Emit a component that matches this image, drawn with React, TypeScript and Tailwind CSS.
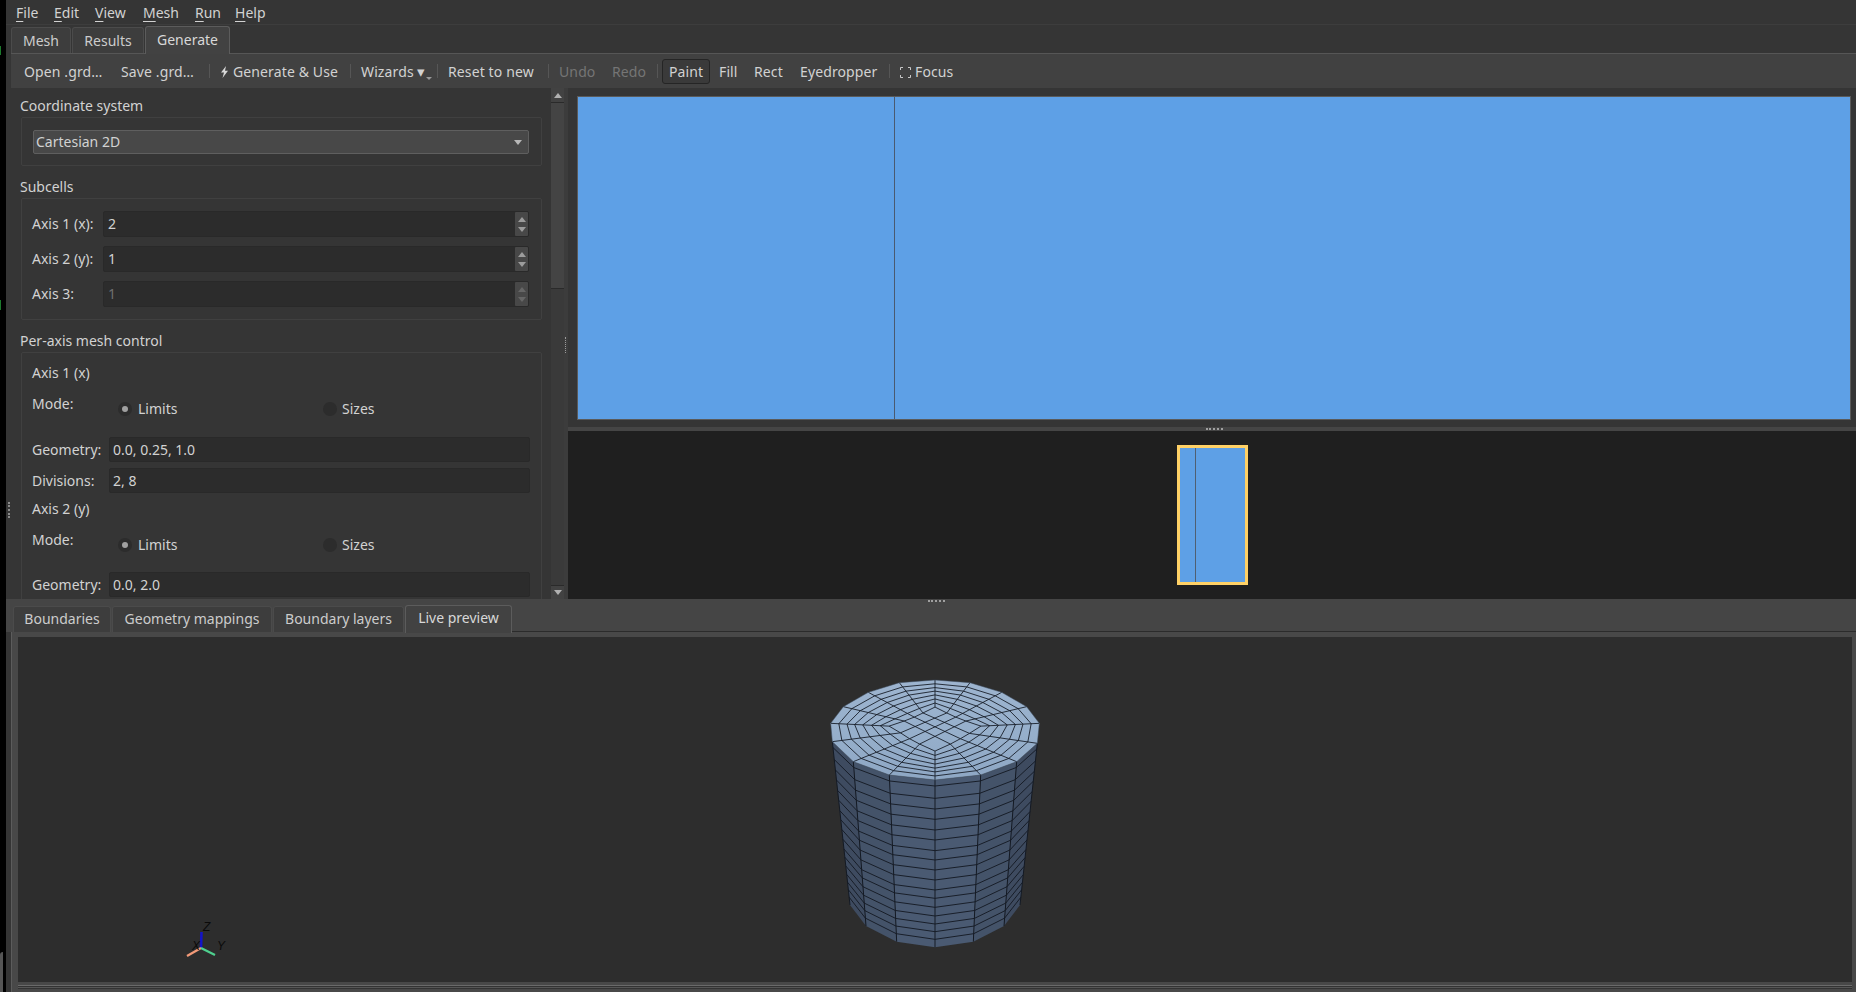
import React from "react";

type P = [number, number];
const topV: P[] = [[405,60],[510,68],[605,97],[680,140],[718,190],[712,250],[650,305],[542,345],[405,360],[268,345],[160,305],[97,245],[92,190],[130,140],[205,97],[298,68]];
const botV: Record<number, P> = {5:[660,735],6:[612,798],7:[520,845],8:[405,862],9:[290,845],10:[198,798],11:[150,735]};
const cx = 405, cy = 205;
const t0 = 0.44;
const ringU = [0, 0.15, 0.3, 0.45, 0.59, 0.72, 0.86];
const sideT = [378,415,447,478,510,540,572,600,630,660,690,715,742,768,792,815,838].map((y) => (y - 360) / 502);
const faceFill: Record<number, string> = {5:"#3e4b60",6:"#445369",7:"#4a5a72",8:"#4a5a72",9:"#445369",10:"#3e4b60"};

function Mesh() {
  const pts = (arr: P[]) => arr.map((p) => p.join(",")).join(" ");
  const ratio = (i: number) => {
    const th = (i / 16) * 2 * Math.PI;
    return 1 / (Math.abs(Math.cos(th)) + Math.abs(Math.sin(th)));
  };
  const ringPt = (i: number, u: number): P => {
    const r = (1 - u) * t0 * ratio(i) + u;
    const v = topV[i];
    return [cx + (v[0] - cx) * r, cy + (v[1] - cy) * r];
  };
  const ring = (u: number) => topV.map((_, i) => ringPt(i, u));
  const lerp = (a: P, b: P, t: number): P => [a[0] + (b[0] - a[0]) * t, a[1] + (b[1] - a[1]) * t];
  const faces = [5, 6, 7, 8, 9, 10];
  const col = "#141a24";
  const grid: [P, P][] = [];
  for (let k = 1; k < 4; k++) {
    grid.push([ringPt(k, 0), ringPt(12 - k, 0)]);
    grid.push([ringPt(16 - k, 0), ringPt(4 + k, 0)]);
  }
  return (
    <svg width={270} height={300} viewBox="0 0 810 900" className="shrink-0">
      <defs>
        <linearGradient id="topg" x1="0" y1="0" x2="0" y2="1">
          <stop offset="0" stopColor="#9db4cf" />
          <stop offset="0.55" stopColor="#96afcb" />
          <stop offset="1" stopColor="#8ea7c4" />
        </linearGradient>
      </defs>
      {faces.map((i) => (
        <polygon key={i} points={pts([topV[i], topV[i + 1], botV[i + 1], botV[i]])} fill={faceFill[i]} />
      ))}
      {faces.map((i) =>
        sideT.map((t, k) => {
          const a = lerp(topV[i], botV[i], t);
          const b = lerp(topV[i + 1], botV[i + 1], t);
          return <line key={`${i}-${k}`} x1={a[0]} y1={a[1]} x2={b[0]} y2={b[1]} stroke={col} strokeWidth={2.8} />;
        })
      )}
      {[5, 6, 7, 8, 9, 10, 11].map((i) => (
        <line key={i} x1={topV[i][0]} y1={topV[i][1]} x2={botV[i][0]} y2={botV[i][1]} stroke={col} strokeWidth={3} />
      ))}
      <polygon points={pts(topV)} fill="url(#topg)" />
      {ringU.map((u) => (
        <polygon key={u} points={pts(ring(u))} fill="none" stroke={col} strokeWidth={2.6} />
      ))}
      {topV.map((v, i) => {
        const s = ringPt(i, 0);
        return <line key={i} x1={s[0]} y1={s[1]} x2={v[0]} y2={v[1]} stroke={col} strokeWidth={2.6} />;
      })}
      {grid.map(([a, b], i) => (
        <line key={`g${i}`} x1={a[0]} y1={a[1]} x2={b[0]} y2={b[1]} stroke={col} strokeWidth={2.6} />
      ))}
      <polygon points={pts(topV)} fill="none" stroke="#3d4a5c" strokeWidth={1.5} />
    </svg>
  );
}

function Triad() {
  return (
    <svg width={100} height={92} viewBox="0 0 100 92" className="absolute left-[142px] top-[263px]">
      <line x1={41} y1={48} x2={41.5} y2={32} stroke="#1414c8" strokeWidth={2.6} />
      <line x1={41} y1={48} x2={27} y2={56} stroke="#f39a78" strokeWidth={2.2} />
      <line x1={41} y1={48} x2={55} y2={55} stroke="#4ed08f" strokeWidth={2.2} />
      <text x={43} y={31} fontSize={12} fontStyle="italic" fill="#0a0a0a" fontFamily="Liberation Sans, sans-serif">Z</text>
      <text x={32} y={50} fontSize={12} fontStyle="italic" fill="#0a0a0a" fontFamily="Liberation Sans, sans-serif">X</text>
      <text x={57} y={50} fontSize={12} fontStyle="italic" fill="#0a0a0a" fontFamily="Liberation Sans, sans-serif">Y</text>
    </svg>
  );
}

function MenuItem({ w, first, rest }: { w: string; first: string; rest: string }) {
  return (
    <span className={`${w} whitespace-nowrap`}>
      <span className="underline underline-offset-[3px]">{first}</span>
      {rest}
    </span>
  );
}

function Sep({ mr }: { mr: string }) {
  return <span className={`${mr} h-[14px] w-px bg-[#565656] shrink-0`} />;
}

function Up({ c }: { c: string }) {
  return (
    <svg width={8} height={5} viewBox="0 0 8 5">
      <polygon points="4,0 8,5 0,5" fill={c} />
    </svg>
  );
}
function Down({ c }: { c: string }) {
  return (
    <svg width={8} height={5} viewBox="0 0 8 5">
      <polygon points="0,0 8,0 4,5" fill={c} />
    </svg>
  );
}

function Spin({ label, value, disabled }: { label: string; value: string; disabled?: boolean }) {
  const c = disabled ? "#666666" : "#9c9c9c";
  return (
    <div className="flex h-[26px] items-center pl-[10px]">
      <span className="w-[71px] whitespace-nowrap">{label}</span>
      <div className={`flex h-[26px] w-[426px] items-center justify-between rounded-[2px] border border-[#292929] bg-[#2c2c2c] pl-[4px] ${disabled ? "text-[#707070]" : ""}`}>
        <span>{value}</span>
        <div className="flex h-[24px] w-[13px] flex-col items-center justify-around rounded-[1px] bg-[#484848] py-[2px]">
          <Up c={c} />
          <Down c={c} />
        </div>
      </div>
    </div>
  );
}

function Field({ label, value }: { label: string; value: string }) {
  return (
    <div className="flex items-center pl-[10px]">
      <span className="w-[77px] whitespace-nowrap">{label}</span>
      <div className="flex h-[25px] w-[421px] items-center rounded-[2px] border border-[#292929] bg-[#2c2c2c] pl-[3px]">{value}</div>
    </div>
  );
}

function ModeRow() {
  return (
    <div className="flex h-[43px] pl-[10px]">
      <span className="h-[20px] w-[86px]">Mode:</span>
      <div className="mt-[5px] flex h-[20px] w-[205px] items-center gap-[6px]">
        <span className="flex h-[14px] w-[14px] items-center justify-center rounded-full bg-[#2c2c2c]">
          <span className="h-[6px] w-[6px] rounded-full bg-[#a0a0a0]" />
        </span>
        <span>Limits</span>
      </div>
      <div className="mt-[5px] flex h-[20px] items-center gap-[5px]">
        <span className="h-[14px] w-[14px] rounded-full bg-[#2c2c2c]" />
        <span>Sizes</span>
      </div>
    </div>
  );
}

function TopTab({ label, w, active, low }: { label: string; w: string; active?: boolean; low?: boolean }) {
  return active ? (
    <div className={`${w} -mb-px flex h-[28px] items-center justify-center rounded-t-[3px] border border-b-0 border-[#5c5c5c] bg-[#424242] ${low ? "pb-[4px]" : "pb-[2px]"} text-[#d8d8d8]`}>{label}</div>
  ) : (
    <div className={`${w} flex h-[26px] items-center justify-center rounded-t-[3px] border border-b-0 border-[#4b4b4b] bg-[#3d3d3d] ${low ? "pb-[2px]" : ""} text-[#cccccc]`}>{label}</div>
  );
}

function ToolText({ w, children, dim }: { w: string; children: React.ReactNode; dim?: boolean }) {
  return <span className={`${w} shrink-0 whitespace-nowrap pt-[2px] ${dim ? "text-[#757575]" : ""}`}>{children}</span>;
}

export default function App() {
  return (
    <div className="flex h-[992px] w-[1856px] overflow-hidden bg-black text-[14px] leading-[20px] text-[#d2d2d2] [font-family:'Noto_Sans',sans-serif]">
      <div className="flex w-[6px] shrink-0 flex-col">
        <div className="mt-[46px] h-[9px] w-px bg-[#1c7a2c]" />
        <div className="mt-[245px] h-[10px] w-px bg-[#1c7a2c]" />
        <div className="mt-[642px] h-[40px] w-[3px] rounded-tl-[3px] bg-[#555555]" />
      </div>
      <div className="relative flex min-w-0 flex-1 flex-col bg-[#353535] pt-px">
        {/* menu */}
        <div className="flex h-[24px] shrink-0 items-center border-b border-[#3d3d3d] pl-[10px]">
          <MenuItem w="w-[38px]" first="F" rest="ile" />
          <MenuItem w="w-[41px]" first="E" rest="dit" />
          <MenuItem w="w-[48px]" first="V" rest="iew" />
          <MenuItem w="w-[52px]" first="M" rest="esh" />
          <MenuItem w="w-[40px]" first="R" rest="un" />
          <MenuItem w="w-[40px]" first="H" rest="elp" />
        </div>
        {/* top tabs */}
        <div className="ml-[5px] flex h-[29px] shrink-0 items-end gap-px border-b border-[#565656]">
          <TopTab label="Mesh" w="w-[60px]" />
          <TopTab label="Results" w="w-[72px]" />
          <TopTab label="Generate" w="w-[85px]" active />
        </div>
        {/* toolbar */}
        <div className="ml-[5px] flex h-[34px] shrink-0 items-center bg-[#414141] pl-[13px] tracking-[0.12px]">
          <ToolText w="w-[97px]">Open .grd…</ToolText>
          <ToolText w="w-[88px]">Save .grd…</ToolText>
          <Sep mr="mr-[10px]" />
          <ToolText w="w-[130px]">
            <span className="inline-flex items-center gap-[4px]">
              <svg width={9} height={12} viewBox="0 0 9 12">
                <path d="M6 0 L1 6.5 L4 6.5 L2.5 12 L8 4.8 L5 4.8 Z" fill="#d8d8d8" />
              </svg>
              Generate &amp; Use
            </span>
          </ToolText>
          <Sep mr="mr-[10px]" />
          <ToolText w="w-[76px]">
            <span className="relative">
              Wizards <span className="text-[15px] leading-[14px]">▾</span>
              <span className="absolute right-[-6px] top-[15px] h-0 w-0 border-x-[3px] border-t-[3px] border-x-transparent border-t-[#9a9a9a]" />
            </span>
          </ToolText>
          <Sep mr="mr-[10px]" />
          <ToolText w="w-[100px]">Reset to new</ToolText>
          <Sep mr="mr-[10px]" />
          <ToolText w="w-[53px]" dim>Undo</ToolText>
          <ToolText w="w-[45px]" dim>Redo</ToolText>
          <Sep mr="mr-[4px]" />
          <span className="flex h-[25px] w-[48px] shrink-0 items-center justify-center rounded-[3px] border border-[#252525] bg-[#3a3a3a] pt-[1px]">Paint</span>
          <ToolText w="ml-[9px] w-[35px]">Fill</ToolText>
          <ToolText w="w-[46px]">Rect</ToolText>
          <ToolText w="w-[89px]">Eyedropper</ToolText>
          <Sep mr="mr-[10px]" />
          <span className="flex items-center gap-[4px] pt-[2px]">
            <svg width={11} height={11} viewBox="0 0 11 11" fill="none" stroke="#c8c8c8" strokeWidth={1}>
              <path d="M.5 3V.5H3M8 .5h2.5V3M10.5 8v2.5H8M3 10.5H.5V8" />
            </svg>
            Focus
          </span>
        </div>
        {/* upper */}
        <div className="ml-[5px] flex h-[511px] shrink-0">
          <div className="h-full w-[540px] shrink-0 overflow-hidden pt-[8px]">
            <div className="ml-[9px] h-[20px] whitespace-nowrap">Coordinate system</div>
            <div className="ml-[10px] mt-px h-[49px] w-[521px] rounded-[2px] border border-[#404040] pl-[11px] pt-[12px]">
              <div className="flex h-[24px] w-[496px] items-center justify-between rounded-[2px] border border-[#5f5f5f] bg-[#484848] pl-[2px] pr-[6px]">
                <span>Cartesian 2D</span>
                <Down c="#b8b8b8" />
              </div>
            </div>
            <div className="ml-[9px] mt-[11px] h-[20px] whitespace-nowrap">Subcells</div>
            <div className="ml-[10px] mt-px flex h-[122px] w-[521px] flex-col gap-[9px] rounded-[2px] border border-[#404040] pt-[12px]">
              <Spin label="Axis 1 (x):" value="2" />
              <Spin label="Axis 2 (y):" value="1" />
              <Spin label="Axis 3:" value="1" disabled />
            </div>
            <div className="ml-[9px] mt-[11px] h-[20px] whitespace-nowrap">Per-axis mesh control</div>
            <div className="ml-[10px] mt-px h-[300px] w-[521px] rounded-[2px] border border-[#404040] pt-[10px]">
              <div className="h-[20px] pl-[10px]">Axis 1 (x)</div>
              <div className="mt-[11px]"><ModeRow /></div>
              <Field label="Geometry:" value="0.0, 0.25, 1.0" />
              <div className="mt-[6px]"><Field label="Divisions:" value="2, 8" /></div>
              <div className="mt-[6px] h-[20px] pl-[10px]">Axis 2 (y)</div>
              <div className="mt-[11px]"><ModeRow /></div>
              <div className="-mt-px"><Field label="Geometry:" value="0.0, 2.0" /></div>
            </div>
          </div>
          {/* scrollbar */}
          <div className="flex h-full w-[13px] shrink-0 flex-col bg-[#3a3a3a]">
            <div className="flex h-[14px] shrink-0 items-center justify-center bg-[#424242]"><Up c="#b0b0b0" /></div>
            <div className="h-px shrink-0 bg-[#2a2a2a]" />
            <div className="h-[186px] shrink-0 border-b border-[#2a2a2a] bg-[#444444]" />
            <div className="flex-1" />
            <div className="flex h-[14px] shrink-0 items-center justify-center border-t border-[#2a2a2a] bg-[#424242]"><Down c="#b0b0b0" /></div>
          </div>
          <div className="relative w-[4px] shrink-0 bg-[#3c3c3c]">
            <div className="absolute left-[1px] top-[249px] h-[16px] w-px border-l border-dotted border-[#9a9a9a]" />
          </div>
          {/* right column */}
          <div className="flex min-w-0 flex-1 flex-col">
            <div className="h-[332px] shrink-0 pl-[9px] pr-[5px] pt-[8px]">
              <div className="flex h-[324px] border border-[#5a5a5a] bg-[#5ea0e6]">
                <div className="h-full w-[317px] border-r border-[#4a5a70]" />
              </div>
            </div>
            <div className="relative h-[11px] shrink-0">
              <div className="absolute bottom-0 left-0 right-0 h-[4px] bg-[#454545]" />
              <div className="absolute bottom-[1px] left-[638px] h-[2px] w-[17px] border-t-2 border-dotted border-[#a0a0a0]" />
            </div>
            <div className="flex flex-1 justify-center bg-[#1f1f1f] pt-[14px]">
              <div className="flex h-[140px] w-[71px] border-[3px] border-[#ffd166] bg-[#5ea0e6]">
                <div className="h-full w-[16px] border-r border-[#4f5f72]" />
              </div>
            </div>
          </div>
        </div>
        {/* bottom tabs */}
        <div className="relative flex h-[33px] shrink-0 items-end gap-px bg-[#454545] pl-[7px]">
          <div className="absolute left-[922px] top-[1px] h-[2px] w-[17px] border-t-2 border-dotted border-[#a0a0a0]" />
          <TopTab label="Boundaries" w="w-[98px]" low />
          <TopTab label="Geometry mappings" w="w-[160px]" low />
          <TopTab label="Boundary layers" w="w-[131px]" low />
          <TopTab label="Live preview" w="w-[107px]" active low />
          <div className="absolute bottom-0 left-[506px] right-0 h-px bg-[#2b2b2b]" />
        </div>
        {/* pane */}
        <div className="ml-[5px] flex min-h-0 flex-1 flex-col border-l border-[#5c5c5c] bg-[#484848] pl-[6px] pr-[4px] pt-[5px]">
          <div className="relative flex h-[345px] shrink-0 justify-center bg-[#2d2d2d] pt-[23px]">
            <Mesh />
            <Triad />
          </div>
          <div className="mt-[3px] h-px bg-[#6a6a6a]" />
          <div className="h-px bg-[#333333]" />
          <div className="h-px bg-[#565656]" />
          <div className="h-px bg-[#333333]" />
        </div>
        <div className="absolute left-[2px] top-[502px] h-[16px] w-px border-l-2 border-dotted border-[#8a8a8a]" />
      </div>
    </div>
  );
}
